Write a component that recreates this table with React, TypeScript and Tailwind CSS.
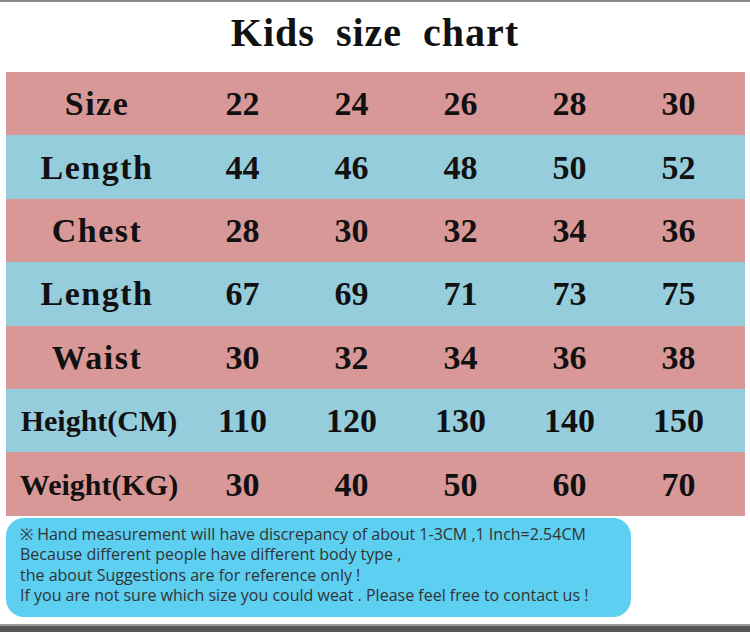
import React from "react";

const rows: { label: string; values: string[]; bg: string; tall?: boolean }[] = [
  { label: "Size", values: ["22", "24", "26", "28", "30"], bg: "bg-[#d99898]" },
  { label: "Length", values: ["44", "46", "48", "50", "52"], bg: "bg-[#96cddd]" },
  { label: "Chest", values: ["28", "30", "32", "34", "36"], bg: "bg-[#d99898]" },
  { label: "Length", values: ["67", "69", "71", "73", "75"], bg: "bg-[#96cddd]" },
  { label: "Waist", values: ["30", "32", "34", "36", "38"], bg: "bg-[#d99898]" },
  { label: "Height(CM)", values: ["110", "120", "130", "140", "150"], bg: "bg-[#96cddd]", tall: true },
  { label: "Weight(KG)", values: ["30", "40", "50", "60", "70"], bg: "bg-[#d99898]", tall: true },
];

export default function App() {
  return (
    <div className="w-[750px] h-[632px] bg-white flex flex-col overflow-hidden">
      <div className="h-[2px] bg-[#8c8c8c]" />
      <div
        className="h-[70px] flex items-center justify-center text-[40px] font-bold text-[#111] tracking-[1px] [word-spacing:10px] pb-[8px]"
        style={{ fontFamily: '"Liberation Serif", serif' }}
      >
        Kids size chart
      </div>
      <div className="mx-[6px] w-[739px] flex flex-col" style={{ fontFamily: '"Liberation Serif", serif' }}>
        {rows.map((r, i) => (
          <div
            key={i}
            className={`${r.bg} h-[63.4px] grid grid-cols-[182px_109px_109px_109px_109px_109px] items-center text-[#111] font-bold`}
          >
            <div className={`text-center ${r.tall ? "text-[30px] pl-[4px]" : "text-[34px] tracking-[1.5px]"}`}>{r.label}</div>
            {r.values.map((v, j) => (
              <div key={j} className="text-center text-[34px]">
                {v}
              </div>
            ))}
          </div>
        ))}
      </div>
      <div
        className="mt-[2px] ml-[6px] w-[625px] h-[99px] rounded-[18px] bg-[#5dcff1] pl-[14px] pt-[6px] text-[16px] leading-[20.5px] text-[#333333]"
        style={{ fontFamily: '"Open Sans", sans-serif' }}
      >
        <div>※ Hand measurement will have discrepancy of about 1-3CM ,1 Inch=2.54CM</div>
        <div>Because different people have different body type ,</div>
        <div>the about Suggestions are for reference only !</div>
        <div>If you are not sure which size you could weat . Please feel free to contact us !</div>
      </div>
      <div className="mt-auto h-[8px] border-t-[2px] border-[#9a9a9a] bg-[#555555]" />
    </div>
  );
}
